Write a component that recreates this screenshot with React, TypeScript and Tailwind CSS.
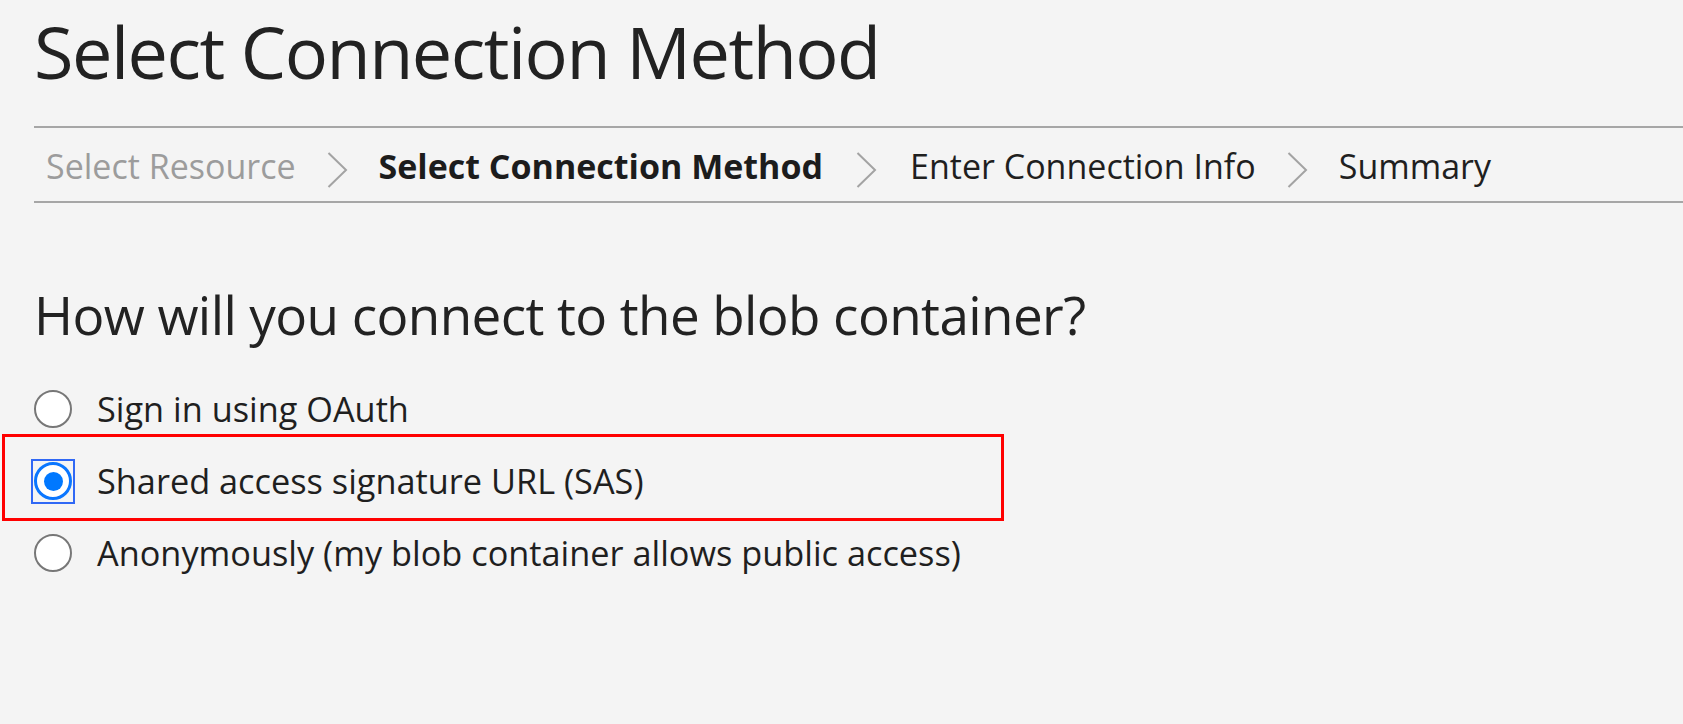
import React from "react";

const font = { fontFamily: '"Open Sans", "Noto Sans", sans-serif' };

function Chevron({ tight }: { tight?: boolean }) {
  return (
    <svg
      width="21"
      height="36"
      viewBox="0 0 21 36"
      className={tight ? "mx-[31px] mt-[6px] shrink-0" : "mx-[33px] mt-[6px] shrink-0"}
    >
      <polyline points="1.5,1 19,18 1.5,35" fill="none" stroke="#a3a3a3" strokeWidth="2" />
    </svg>
  );
}

function Radio({ checked }: { checked?: boolean }) {
  if (checked) {
    return (
      <div className="relative w-[38px] h-[38px] shrink-0">
        <div className="absolute -left-[3px] -top-[3px] w-[44px] h-[45px] border-2 border-[#3068f5]" />
        <div className="w-[38px] h-[38px] rounded-full border-[3px] border-[#0a76ff] bg-white flex items-center justify-center">
          <div className="w-[19px] h-[19px] rounded-full bg-[#0078ff]" />
        </div>
      </div>
    );
  }
  return <div className="w-[38px] h-[38px] shrink-0 rounded-full border-2 border-[#777777] bg-white" />;
}

export default function App() {
  const options = [
    { label: "Sign in using OAuth", checked: false },
    { label: "Shared access signature URL (SAS)", checked: true },
    { label: "Anonymously (my blob container allows public access)", checked: false },
  ];
  return (
    <div className="w-[1683px] h-[724px] bg-[#f4f4f4] overflow-hidden text-[#1f1f1f]" style={font}>
      <div className="pl-[34px]">
        <h1 className="pt-[11px] text-[72px] leading-[80px] tracking-[-1.5px] font-normal text-[#222222]">Select Connection Method</h1>
        <nav className="mt-[35px] border-t-2 border-b-2 border-[#a6a6a6] h-[77px] flex items-start pt-[2px]">
          <div className="flex items-center h-[73px]">
            <span className="text-[34px] leading-[73px] text-[#9c9c9c] ml-[12px]">Select Resource</span>
            <Chevron tight />
            <span className="text-[34px] leading-[73px] font-bold text-[#1c1c1c]">Select Connection Method</span>
            <Chevron />
            <span className="text-[34px] leading-[73px] text-[#1f1f1f]">Enter Connection Info</span>
            <Chevron tight />
            <span className="text-[34px] leading-[73px] text-[#1f1f1f]">Summary</span>
          </div>
        </nav>
        <h2 className="mt-[80px] text-[53px] leading-[64px] tracking-[-0.6px] font-normal text-[#222222]">How will you connect to the blob container?</h2>
        <div className="relative mt-[26px]">
          <div className="absolute left-[-32px] top-[61px] w-[1002px] h-[87px] border-[3px] border-[#ff0000] pointer-events-none" />
          {options.map((o) => (
            <div key={o.label} className="flex items-center h-[72px]">
              <Radio checked={o.checked} />
              <span className="ml-[25px] text-[34.3px] leading-[38px] text-[#1f1f1f]">{o.label}</span>
            </div>
          ))}
        </div>
      </div>
    </div>
  );
}
